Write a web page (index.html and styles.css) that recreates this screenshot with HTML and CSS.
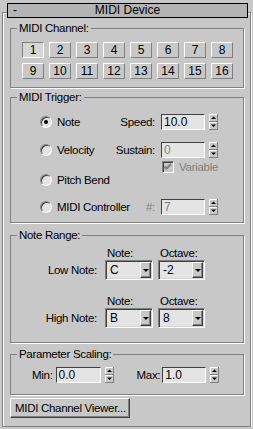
FILE: index.html
```html
<!DOCTYPE html>
<html lang="en">
<head>
    <meta charset="UTF-8">
    <meta name="viewport" content="width=device-width, initial-scale=1.0">
    <title>MIDI Device</title>
    <link rel="stylesheet" href="styles.css">
</head>
<body>
    <div class="rollout">
        <div class="rollout-title">
            <span class="toggle">-</span>
            <span class="title-text">MIDI Device</span>
            <span></span>
        </div>

        <fieldset class="group channel">
            <legend>MIDI Channel:</legend>
            <div class="channel-grid">
                <button class="chan pressed">1</button>
                <button class="chan">2</button>
                <button class="chan">3</button>
                <button class="chan">4</button>
                <button class="chan">5</button>
                <button class="chan">6</button>
                <button class="chan">7</button>
                <button class="chan">8</button>
                <button class="chan">9</button>
                <button class="chan">10</button>
                <button class="chan">11</button>
                <button class="chan">12</button>
                <button class="chan">13</button>
                <button class="chan">14</button>
                <button class="chan">15</button>
                <button class="chan">16</button>
            </div>
        </fieldset>

        <fieldset class="group trigger">
            <legend>MIDI Trigger:</legend>
            <div class="trigger-body">
                <div class="trigger-row">
                    <div class="radio-row"><span class="radio checked"></span>Note</div>
                    <div class="param">
                        <span class="param-label">Speed:</span>
                        <span class="field">10.0</span>
                        <svg class="spinner" width="9" height="16" viewBox="0 0 9 16"><rect width="9" height="16" fill="#c8c8c8"/><path d="M0 0.5H9M0.5 0V16M0 8.5H9" stroke="#fff"/><path d="M0 15.5H9M8.5 0V16M0 7.5H9" stroke="#808080"/><polygon points="4.5,2.5 7,5 2,5" fill="#000"/><polygon points="2,10.5 7,10.5 4.5,13" fill="#000"/></svg>
                    </div>
                </div>
                <div class="trigger-row gap-sustain">
                    <div class="radio-row"><span class="radio"></span>Velocity</div>
                    <div class="param">
                        <span class="param-label">Sustain:</span>
                        <span class="field dim">0</span>
                        <svg class="spinner" width="9" height="16" viewBox="0 0 9 16"><rect width="9" height="16" fill="#c8c8c8"/><path d="M0 0.5H9M0.5 0V16M0 8.5H9" stroke="#fff"/><path d="M0 15.5H9M8.5 0V16M0 7.5H9" stroke="#808080"/><polygon points="4.5,2.5 7,5 2,5" fill="#000"/><polygon points="2,10.5 7,10.5 4.5,13" fill="#000"/></svg>
                    </div>
                </div>
                <div class="check-row">
                    <span class="checkbox">
                        <svg width="10" height="10" viewBox="0 0 10 10"><path d="M1.5 4.5L3.5 6.5L8 2" fill="none" stroke="#808080" stroke-width="2"/></svg>
                    </span>
                    <span class="dim">Variable</span>
                </div>
                <div class="radio-row pitch-row"><span class="radio"></span>Pitch Bend</div>
                <div class="trigger-row gap-hash">
                    <div class="radio-row"><span class="radio"></span>MIDI Controller</div>
                    <div class="param">
                        <span class="param-label dim">#:</span>
                        <span class="field dim">7</span>
                        <svg class="spinner" width="9" height="16" viewBox="0 0 9 16"><rect width="9" height="16" fill="#c8c8c8"/><path d="M0 0.5H9M0.5 0V16M0 8.5H9" stroke="#fff"/><path d="M0 15.5H9M8.5 0V16M0 7.5H9" stroke="#808080"/><polygon points="4.5,2.5 7,5 2,5" fill="#000"/><polygon points="2,10.5 7,10.5 4.5,13" fill="#000"/></svg>
                    </div>
                </div>
            </div>
        </fieldset>

        <fieldset class="group range">
            <legend>Note Range:</legend>
            <div class="range-grid">
                <span></span>
                <span class="col-head">Note:</span>
                <span class="col-head">Octave:</span>

                <span class="row-label">Low Note:</span>
                <div class="combo"><span class="combo-text">C</span><span class="combo-btn"></span></div>
                <div class="combo"><span class="combo-text">-2</span><span class="combo-btn"></span></div>

                <span></span>
                <span class="col-head">Note:</span>
                <span class="col-head">Octave:</span>

                <span class="row-label">High Note:</span>
                <div class="combo"><span class="combo-text">B</span><span class="combo-btn"></span></div>
                <div class="combo"><span class="combo-text">8</span><span class="combo-btn"></span></div>
            </div>
        </fieldset>

        <fieldset class="group scaling">
            <legend>Parameter Scaling:</legend>
            <div class="scale-row">
                <span class="scale-label">Min:</span>
                <span class="field min-field">0.0</span>
                <svg class="spinner" width="9" height="16" viewBox="0 0 9 16"><rect width="9" height="16" fill="#c8c8c8"/><path d="M0 0.5H9M0.5 0V16M0 8.5H9" stroke="#fff"/><path d="M0 15.5H9M8.5 0V16M0 7.5H9" stroke="#808080"/><polygon points="4.5,2.5 7,5 2,5" fill="#000"/><polygon points="2,10.5 7,10.5 4.5,13" fill="#000"/></svg>
                <span class="scale-label max-label">Max:</span>
                <span class="field">1.0</span>
                <svg class="spinner" width="9" height="16" viewBox="0 0 9 16"><rect width="9" height="16" fill="#c8c8c8"/><path d="M0 0.5H9M0.5 0V16M0 8.5H9" stroke="#fff"/><path d="M0 15.5H9M8.5 0V16M0 7.5H9" stroke="#808080"/><polygon points="4.5,2.5 7,5 2,5" fill="#000"/><polygon points="2,10.5 7,10.5 4.5,13" fill="#000"/></svg>
            </div>
        </fieldset>

        <button class="viewer-button">MIDI Channel Viewer...</button>
    </div>
</body>
</html>
```

FILE: styles.css
```css
body {
    margin: 0;
    background-color: #c8c8c8;
    color: #000;
    font-family: 'Liberation Sans', Arial, sans-serif;
    font-size: 11.5px;
    letter-spacing: -0.3px;
    white-space: nowrap;
}
.rollout {
    margin: 12px 2px 0 2px;
    height: 415px;
    box-sizing: border-box;
    border: 1px solid #808080;
    box-shadow: 1px 1px 0 #fff, inset 1px 1px 0 #fff;
}
.rollout-title {
    display: grid;
    grid-template-columns: 1fr auto 1fr;
    height: 15px;
    box-sizing: border-box;
    margin: -10px 2px 0 4px;
    border: 1px solid #000;
    background-color: #b4b4b4;
    line-height: 13px;
    font-size: 12px;
    letter-spacing: 0;
}
.toggle {
    padding-left: 5px;
}

/* group boxes */
.group {
    margin: 0 6px 0 7px;
    padding: 0;
    min-width: 0;
    border: 1px solid #808080;
    box-shadow: 1px 1px 0 #fff;
}
.group legend {
    margin-left: 6px;
    padding: 0 2px;
    line-height: 13px;
}
.channel {
    margin-top: 4px;
}
.trigger {
    margin-top: 3px;
}
.range {
    margin-top: 6px;
}
.scaling {
    margin-top: 5px;
}

/* channel buttons */
.channel-grid {
    display: grid;
    grid-template-columns: repeat(8, 22px);
    grid-auto-rows: 16px;
    gap: 5px;
    padding: 7px 0 8px 11px;
}
.chan {
    padding: 0;
    font-family: inherit;
    font-size: 12px;
    line-height: 14px;
    color: #000;
    background-color: #c8c8c8;
    border: 1px solid;
    border-color: #fff #808080 #808080 #fff;
}
.chan.pressed {
    border-color: #808080 #fff #fff #808080;
    background-color: #d6d6d6;
}

/* trigger */
.trigger-body {
    display: flex;
    flex-direction: column;
    padding: 10px 25px 7px 29px;
}
.trigger-row {
    display: flex;
    justify-content: space-between;
    align-items: center;
    height: 16px;
}
.gap-sustain {
    margin-top: 12px;
}
.gap-hash {
    margin-top: 13px;
}
.radio-row {
    display: flex;
    align-items: center;
    gap: 5px;
    height: 13px;
}
.pitch-row {
    margin-top: 0;
}
.radio {
    display: flex;
    align-items: center;
    justify-content: center;
    flex-shrink: 0;
    width: 12px;
    height: 12px;
    box-sizing: border-box;
    border-radius: 50%;
    border: 1px solid;
    border-color: #808080 #fff #fff #808080;
    background-color: #e4e4e4;
    box-shadow: inset 1px 1px 0 #404040;
}
.radio.checked::after {
    content: "";
    width: 4px;
    height: 4px;
    border-radius: 50%;
    background-color: #000;
}
.param {
    display: flex;
    align-items: center;
}
.param-label {
    margin-right: 6px;
}
.field {
    width: 44px;
    height: 16px;
    box-sizing: border-box;
    padding-left: 2px;
    border: 1px solid;
    border-color: #404040 #fff #fff #404040;
    background-color: #e4e4e4;
    font-size: 12px;
    line-height: 14px;
    letter-spacing: 0;
}
.spinner {
    display: block;
    flex-shrink: 0;
    margin-left: 4px;
}
.dim {
    color: #808080;
}
.check-row {
    display: flex;
    align-items: center;
    align-self: flex-end;
    gap: 5px;
    height: 12px;
    margin-top: 3px;
}
.checkbox {
    display: flex;
    align-items: center;
    justify-content: center;
    width: 12px;
    height: 12px;
    box-sizing: border-box;
    border: 1px solid;
    border-color: #808080 #fff #fff #808080;
    box-shadow: inset 1px 1px 0 #404040;
    background-color: #c8c8c8;
}

/* note range */
.range-grid {
    display: grid;
    grid-template-columns: 78px 48px 47px;
    grid-template-rows: 13px 20px 28px 20px;
    column-gap: 5px;
    padding: 5px 0 14px 11px;
}
.col-head {
    align-self: end;
    padding-left: 2px;
    line-height: 13px;
}
.row-label {
    align-self: center;
    text-align: right;
    margin-right: 3px;
}
.combo {
    display: flex;
    align-items: stretch;
    box-sizing: border-box;
    padding: 1px;
    border: 1px solid;
    border-color: #808080 #fff #fff #808080;
    box-shadow: inset 1px 1px 0 #404040, inset -1px -1px 0 #d4d4d4;
    background-color: #e4e4e4;
    font-size: 12px;
    letter-spacing: 0;
}
.combo-text {
    flex: 1;
    padding-left: 3px;
    line-height: 16px;
}
.combo-btn {
    width: 11px;
    box-sizing: border-box;
    border: 1px solid;
    border-color: #fff #404040 #404040 #fff;
    box-shadow: inset -1px -1px 0 #808080;
    background-color: #c8c8c8;
    display: flex;
    align-items: center;
    justify-content: center;
}
.combo-btn::after {
    content: "";
    border-left: 3px solid transparent;
    border-right: 3px solid transparent;
    border-top: 3px solid #000;
    margin-top: 1px;
}

/* parameter scaling */
.scale-row {
    display: flex;
    align-items: center;
    height: 16px;
    padding: 6px 0 11px 21px;
}
.scale-label {
    margin-right: 3px;
}
.min-field {
    width: 45px;
}
.max-label {
    margin-left: 23px;
    margin-right: 2px;
}

.viewer-button {
    display: block;
    width: 120px;
    height: 20px;
    margin: 3px 0 0 7px;
    padding: 0 0 0 4px;
    text-align: left;
    white-space: nowrap;
    font-family: inherit;
    font-size: 11.5px;
    letter-spacing: -0.3px;
    color: #000;
    background-color: #c8c8c8;
    border: 1px solid;
    border-color: #fff #404040 #404040 #fff;
    box-shadow: inset -1px -1px 0 #808080;
}
```
